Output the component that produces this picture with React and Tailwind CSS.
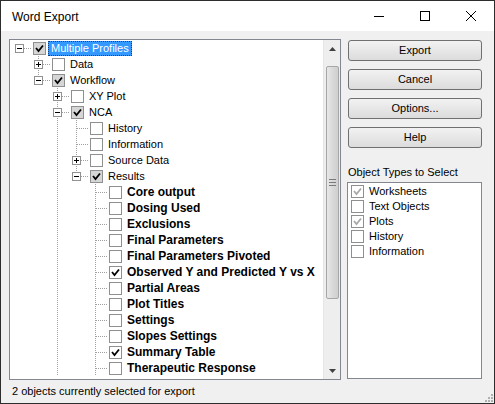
import React from 'react';

const font = { fontFamily: '"Liberation Sans", Arial, sans-serif' };

// level, expander, check state, bold, guides (ancestor columns with a continuing line), hasNext
const rows = [
  { label: 'Multiple Profiles', level: 0, exp: '-', check: 'mixed', top: false, next: false, selected: true },
  { label: 'Data', level: 1, exp: '+', check: 'none', guides: [false], next: true },
  { label: 'Workflow', level: 1, exp: '-', check: 'mixed', guides: [false], next: false },
  { label: 'XY Plot', level: 2, exp: '+', check: 'none', guides: [false, false], next: true },
  { label: 'NCA', level: 2, exp: '-', check: 'mixed', guides: [false, false], next: true },
  { label: 'History', level: 3, check: 'none', guides: [false, false, true], next: true },
  { label: 'Information', level: 3, check: 'none', guides: [false, false, true], next: true },
  { label: 'Source Data', level: 3, exp: '+', check: 'none', guides: [false, false, true], next: true },
  { label: 'Results', level: 3, exp: '-', check: 'mixed', guides: [false, false, true], next: false },
  ...[
    ['Core output', 'none'],
    ['Dosing Used', 'none'],
    ['Exclusions', 'none'],
    ['Final Parameters', 'none'],
    ['Final Parameters Pivoted', 'none'],
    ['Observed Y and Predicted Y vs X', 'checked'],
    ['Partial Areas', 'none'],
    ['Plot Titles', 'none'],
    ['Settings', 'none'],
    ['Slopes Settings', 'none'],
    ['Summary Table', 'checked'],
    ['Therapeutic Response', 'none'],
  ].map(([label, check]) => ({ label, level: 4, check, bold: true, guides: [false, false, true, false], next: true })),
];

const dot = '#a0a0a0';

function Guide({ on }) {
  return (
    <svg width="19" height="16" className="shrink-0" shapeRendering="crispEdges">
      {on && <line x1="9.5" y1="0" x2="9.5" y2="16" stroke={dot} strokeDasharray="1 1" />}
    </svg>
  );
}

function Connector({ exp, top, next }) {
  return (
    <svg width="23" height="16" className="shrink-0" shapeRendering="crispEdges">
      {top && <line x1="9.5" y1="0" x2="9.5" y2="8" stroke={dot} strokeDasharray="1 1" />}
      {next && <line x1="9.5" y1="8" x2="9.5" y2="16" stroke={dot} strokeDasharray="1 1" />}
      <line x1="10" y1="8.5" x2="22" y2="8.5" stroke={dot} strokeDasharray="1 1" />
      {exp && (
        <g>
          <rect x="5.5" y="4.5" width="8" height="8" fill="#fff" stroke="#919191" />
          <line x1="7" y1="8.5" x2="12" y2="8.5" stroke="#000" />
          {exp === '+' && <line x1="9.5" y1="6" x2="9.5" y2="11" stroke="#000" />}
        </g>
      )}
    </svg>
  );
}

function Box({ state, disabled }) {
  const fill = state === 'mixed' ? '#d6d6d6' : '#fff';
  const tick = disabled ? '#a8a8a8' : '#000';
  return (
    <svg width="13" height="13" className="shrink-0" shapeRendering="crispEdges">
      <rect x="0.5" y="0.5" width="12" height="12" fill={fill} stroke="#8e8f8f" />
      {(state === 'checked' || state === 'mixed') && (
        <polyline points="3,6 5.5,9 10,3.5" fill="none" stroke={tick} strokeWidth="1.8" shapeRendering="auto" />
      )}
    </svg>
  );
}

function TreeRow({ r }) {
  const guides = r.guides || [];
  return (
    <div className="flex items-center h-[16px] whitespace-nowrap">
      {guides.map((g, i) => (
        <Guide key={i} on={g} />
      ))}
      <Connector exp={r.exp} top={r.top !== false} next={r.next} />
      <Box state={r.check} />
      <span
        className={
          'ml-[2px] px-[2px] h-[15px] leading-[13px] border ' +
          (r.bold ? 'font-bold text-[12px] ' : 'text-[11px] ') +
          (r.selected ? 'bg-[#3399ff] text-white border-dotted border-[#1e3c6e]' : 'text-black border-transparent')
        }
      >
        {r.label}
      </span>
    </div>
  );
}

function Scrollbar() {
  return (
    <div className="w-[17px] shrink-0 bg-[#eeeeee] border-l border-[#e6e6e6] flex flex-col items-center">
      <div className="h-[17px] flex items-center justify-center">
        <svg width="7" height="4"><polygon points="0,4 3.5,0 7,4" fill="#404040" /></svg>
      </div>
      <div className="h-[9px]" />
      <div className="w-[13px] h-[233px] rounded-[2px] border border-[#a6a6a6] bg-gradient-to-r from-[#e8e8e8] via-[#d9d9d9] to-[#cfcfcf] flex items-center justify-center">
        <svg width="7" height="7" shapeRendering="crispEdges">
          <line x1="0" y1="0.5" x2="7" y2="0.5" stroke="#7a7a7a" />
          <line x1="0" y1="3.5" x2="7" y2="3.5" stroke="#7a7a7a" />
          <line x1="0" y1="6.5" x2="7" y2="6.5" stroke="#7a7a7a" />
        </svg>
      </div>
      <div className="flex-1" />
      <div className="h-[17px] flex items-center justify-center">
        <svg width="7" height="4"><polygon points="0,0 3.5,4 7,0" fill="#404040" /></svg>
      </div>
    </div>
  );
}

function Button({ children }) {
  return (
    <div className="h-[21px] mb-[8px] rounded-[3px] border border-[#707070] bg-gradient-to-b from-[#f2f2f2] to-[#dcdcdc] flex items-center justify-center text-[11px] text-black">
      {children}
    </div>
  );
}

const types = [
  ['Worksheets', 'checked'],
  ['Text Objects', 'none'],
  ['Plots', 'checked'],
  ['History', 'none'],
  ['Information', 'none'],
];

export default function App() {
  return (
    <div className="w-[495px] h-[404px] border border-[#2d2d2d] bg-[#f0f0f0] flex flex-col overflow-hidden" style={font}>
      {/* title bar */}
      <div className="h-[30px] bg-white flex items-center shrink-0">
        <span className="pl-[11px] text-[12px] text-black flex-1 leading-[14px] pt-[2px]">Word Export</span>
        <div className="flex items-center h-full">
          <div className="w-[46px] h-full flex items-center justify-center">
            <svg width="10" height="1" shapeRendering="crispEdges"><line x1="0" y1="0.5" x2="10" y2="0.5" stroke="#000" /></svg>
          </div>
          <div className="w-[46px] h-full flex items-center justify-center">
            <svg width="10" height="10" shapeRendering="crispEdges"><rect x="0.5" y="0.5" width="9" height="9" fill="none" stroke="#000" /></svg>
          </div>
          <div className="w-[46px] h-full flex items-center justify-center">
            <svg width="10" height="10"><path d="M0 0L10 10M10 0L0 10" stroke="#000" strokeWidth="1" /></svg>
          </div>
        </div>
      </div>

      {/* body */}
      <div className="flex pl-[8px] pt-[8px] h-[349px]">
        <div className="w-[332px] h-[341px] border border-[#828790] bg-white flex overflow-hidden">
          <div className="flex-1 pt-[0px] overflow-hidden">
            {rows.map((r, i) => (
              <TreeRow key={i} r={r} />
            ))}
          </div>
          <Scrollbar />
        </div>

        <div className="ml-[7px] w-[134px] flex flex-col pt-[1px]">
          <Button>Export</Button>
          <Button>Cancel</Button>
          <Button>Options...</Button>
          <Button>Help</Button>
          <div className="text-[11px] text-black mt-[10px] mb-[3px] leading-[13px]">Object Types to Select</div>
          <div className="h-[197px] -ml-[1px] border border-[#828790] bg-white pt-[1px] pl-[3px]">
            {types.map(([t, s]) => (
              <div key={t} className="flex items-center h-[15px]">
                <Box state={s} disabled />
                <span className="ml-[5px] text-[11px] text-black leading-[13px]">{t}</span>
              </div>
            ))}
          </div>
        </div>
      </div>

      {/* status */}
      <div className="flex-1 flex items-center justify-between pl-[11px]">
        <span className="text-[11px] text-black">2 objects currently selected for export</span>
        <svg width="8" height="8" className="self-end mb-[1px] mr-[1px]">
          <rect x="6" y="0" width="2" height="2" fill="#b0b0b0" />
          <rect x="3" y="3" width="2" height="2" fill="#b0b0b0" />
          <rect x="6" y="3" width="2" height="2" fill="#b0b0b0" />
          <rect x="0" y="6" width="2" height="2" fill="#b0b0b0" />
          <rect x="3" y="6" width="2" height="2" fill="#b0b0b0" />
          <rect x="6" y="6" width="2" height="2" fill="#b0b0b0" />
        </svg>
      </div>
    </div>
  );
}
